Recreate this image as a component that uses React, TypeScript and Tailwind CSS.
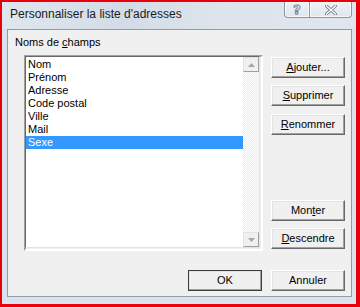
import React from 'react';

// Boîte de dialogue "Personnaliser la liste d'adresses" (Windows 7, style classique)

const champs = ['Nom', 'Prénom', 'Adresse', 'Code postal', 'Ville', 'Mail', 'Sexe'];

const Bouton = ({ children, className = '', defaut = false }: { children: React.ReactNode; className?: string; defaut?: boolean }) => (
  <div
    className={`h-[21px] w-[74px] flex items-center justify-center text-[11px] leading-[13px] text-black bg-[#f0f0f0] border ${
      defaut ? 'border-[#3c3c3c]' : 'border-t-white border-l-white border-r-[#696969] border-b-[#696969]'
    } shadow-[inset_-1px_-1px_0_#a0a0a0,inset_1px_1px_0_#e3e3e3] ${className}`}
  >
    {children}
  </div>
);

const Fleche = ({ bas = false }: { bas?: boolean }) => (
  <div className="h-[15px] w-[16px] flex items-center justify-center bg-[#f0f0f0] border border-t-[#e3e3e3] border-l-[#e3e3e3] border-r-[#a0a0a0] border-b-[#a0a0a0]">
    <svg width="7" height="4" viewBox="0 0 7 4">
      {bas ? <path d="M0 0h7L3.5 4z" fill="#a6a6a6" /> : <path d="M0 4h7L3.5 0z" fill="#a6a6a6" />}
    </svg>
  </div>
);

const App = () => {
  return (
    <div className="w-[360px] h-[307px] flex flex-col border-t-2 border-l-2 border-r-4 border-b-[3px] border-[#e8000b] bg-[#dae2eb] font-['Liberation_Sans',Arial,sans-serif] overflow-hidden">
      {/* Barre de titre */}
      <div className="h-[27px] flex items-start bg-[linear-gradient(90deg,#dfe6ee_0%,#d3dce6_35%,#dde4ec_60%,#dfe6ee_100%)]">
        <div className="pl-[8px] pt-[4px] text-[12px] leading-[16px] text-[#1b1b1b]">Personnaliser la liste d'adresses</div>
        <div className="ml-auto mr-[4px] flex h-[16px]">
          <div className="w-[26px] h-full flex items-center justify-center border border-[#8796a9] border-t-0 rounded-bl-[4px] bg-[linear-gradient(#eef2f6,#dfe6ee)] shadow-[inset_0_0_0_1px_rgba(255,255,255,0.7)]">
            <svg width="10" height="13" viewBox="0 0 10 13">
              <text x="5" y="11" textAnchor="middle" fontSize="13" fontFamily="DejaVu Sans, sans-serif" fontWeight="bold" fill="#fff" stroke="#6e7886" strokeWidth="0.9">?</text>
            </svg>
          </div>
          <div className="w-[42px] h-full flex items-center justify-center border border-l-0 border-[#8796a9] border-t-0 rounded-br-[4px] bg-[linear-gradient(#eef2f6,#dfe6ee)] shadow-[inset_0_0_0_1px_rgba(255,255,255,0.7)]">
            <svg width="12" height="10" viewBox="0 0 12 10">
              <path d="M1.5 1l9 8M10.5 1l-9 8" stroke="#6e7886" strokeWidth="3" strokeLinecap="square" />
              <path d="M1.5 1l9 8M10.5 1l-9 8" stroke="#fff" strokeWidth="1.4" strokeLinecap="square" />
            </svg>
          </div>
        </div>
      </div>

      {/* Zone cliente */}
      <div className="flex-1 ml-[5px] mr-[4px] mb-[7px] border border-[#8e9bab] bg-[#f0f0f0] flex flex-col text-[11px] leading-[13px] text-black">
        <div className="flex flex-1">
          <div className="flex flex-col pl-[7px] pt-[6px]">
            <div>
              Noms de <span className="underline underline-offset-[1px]">c</span>hamps
            </div>
            <div className="ml-[9px] mt-[6px] w-[239px] h-[196px] border-2 border-t-[#a0a0a0] border-l-[#a0a0a0] border-r-white border-b-white">
              <div className="w-full h-full flex border border-t-[#696969] border-l-[#696969] border-r-[#e3e3e3] border-b-[#e3e3e3] -m-[1px] bg-white">
                <div className="flex-1 flex flex-col pt-[1px]">
                  {champs.map((c) => (
                    <div key={c} className={`h-[13px] pl-[2px] ${c === 'Sexe' ? 'bg-[#3399ff] text-white' : ''}`}>
                      {c}
                    </div>
                  ))}
                </div>
                <div className="w-[16px] flex flex-col justify-between bg-[repeating-conic-gradient(#ececec_0_25%,#ffffff_0_50%)] bg-[length:2px_2px]">
                  <Fleche />
                  <Fleche bas />
                </div>
              </div>
            </div>
          </div>
          <div className="ml-[8px] pt-[27px] flex flex-col">
            <Bouton>
              <span><span className="underline underline-offset-[1px]">A</span>jouter...</span>
            </Bouton>
            <Bouton className="mt-[7px]">
              <span><span className="underline underline-offset-[1px]">S</span>upprimer</span>
            </Bouton>
            <Bouton className="mt-[8px]">
              <span><span className="underline underline-offset-[1px]">R</span>enommer</span>
            </Bouton>
            <Bouton className="mt-[65px]">
              <span>Mon<span className="underline underline-offset-[1px]">t</span>er</span>
            </Bouton>
            <Bouton className="mt-[7px]">
              <span><span className="underline underline-offset-[1px]">D</span>escendre</span>
            </Bouton>
          </div>
        </div>
        <div className="flex justify-end gap-[9px] pr-[6px] pb-[5px]">
          <Bouton defaut>OK</Bouton>
          <Bouton>Annuler</Bouton>
        </div>
      </div>
    </div>
  );
};

export default App;
